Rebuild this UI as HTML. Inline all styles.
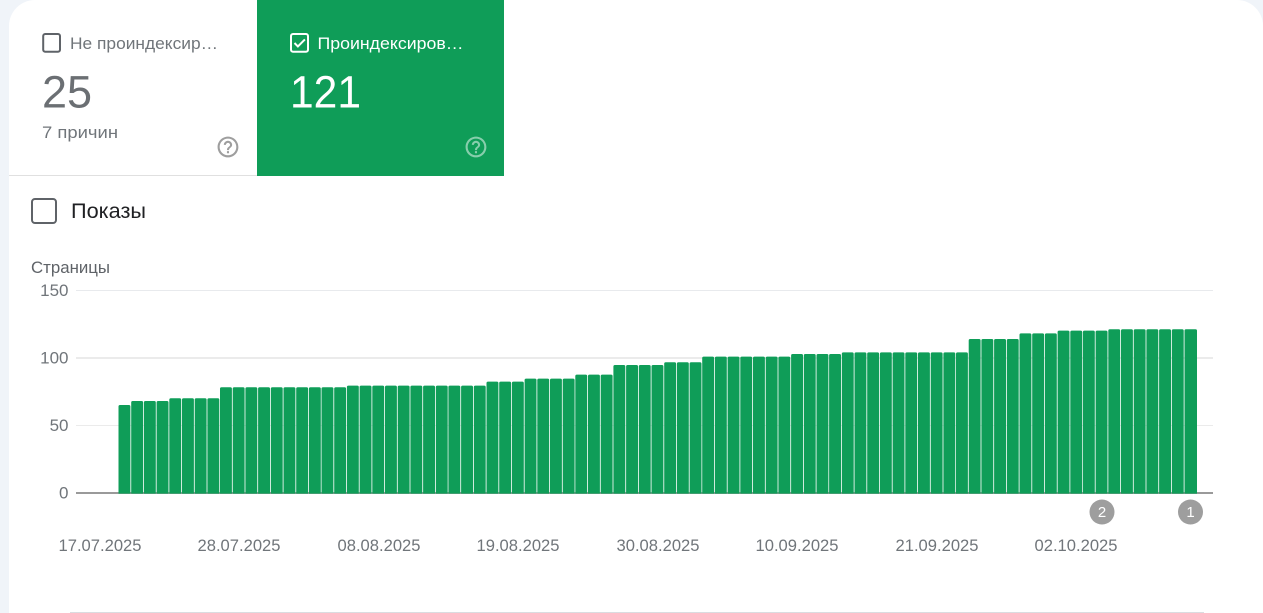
<!DOCTYPE html>
<html lang="ru">
<head>
<meta charset="utf-8">
<title>Страницы</title>
<style>
html,body{margin:0;padding:0;width:1263px;height:613px;overflow:hidden;background:#f0f4f9}
svg{position:absolute;left:0;top:0;display:block}
text{font-family:"Liberation Sans",sans-serif}
#b rect{width:11.9px;height:200px;rx:1.5px;ry:1.5px}
</style>
</head>
<body>
<svg width="1263" height="613" viewBox="0 0 1263 613" xmlns="http://www.w3.org/2000/svg">
<defs><clipPath id="c"><rect x="100" y="300" width="1110" height="193.6"/></clipPath></defs>
<path d="M9 613V26A26 26 0 0 1 35 0H1237A26 26 0 0 1 1263 26V613Z" fill="#fff"/>
<rect x="9" y="175" width="248" height="1" fill="#e0e0e0"/>
<rect x="257" y="0" width="247" height="176" fill="#0f9d58"/>

<rect x="43.2" y="34" width="16.8" height="17.8" rx="2" fill="none" stroke="#5f6368" stroke-width="2"/>
<text x="70" y="49" font-size="17" fill="#70757a" textLength="148" lengthAdjust="spacingAndGlyphs">Не проиндексир…</text>
<text x="42" y="107.5" font-size="45" fill="#6b6f73">25</text>
<text x="42" y="138" font-size="17" fill="#70757a" textLength="76" lengthAdjust="spacingAndGlyphs">7 причин</text>
<g transform="translate(215.5 134.5) scale(1.04)"><path fill="#9e9e9e" d="M11 18h2v-2h-2v2zm1-16C6.48 2 2 6.48 2 12s4.48 10 10 10 10-4.48 10-10S17.52 2 12 2zm0 18c-4.41 0-8-3.59-8-8s3.59-8 8-8 8 3.59 8 8-3.59 8-8 8zm0-14c-2.21 0-4 1.79-4 4h2c0-1.1.9-2 2-2s2 .9 2 2c0 2-3 1.75-3 5h2c0-2.25 3-2.5 3-5 0-2.21-1.79-4-4-4z"/></g>

<rect x="291" y="34" width="17" height="17.8" rx="2" fill="none" stroke="#fff" stroke-width="2"/>
<path d="M294.5 43l3.4 3.4 7-7" fill="none" stroke="#fff" stroke-width="2"/>
<text x="317.5" y="49" font-size="17" fill="#fff" textLength="146" lengthAdjust="spacingAndGlyphs">Проиндексиров…</text>
<text x="290" y="107.5" font-size="45" fill="#fff" textLength="71" lengthAdjust="spacingAndGlyphs">121</text>
<g transform="translate(463.5 134.5) scale(1.04)"><path fill="#fff" fill-opacity=".5" d="M11 18h2v-2h-2v2zm1-16C6.48 2 2 6.48 2 12s4.48 10 10 10 10-4.48 10-10S17.52 2 12 2zm0 18c-4.41 0-8-3.59-8-8s3.59-8 8-8 8 3.59 8 8-3.59 8-8 8zm0-14c-2.21 0-4 1.79-4 4h2c0-1.1.9-2 2-2s2 .9 2 2c0 2-3 1.75-3 5h2c0-2.25 3-2.5 3-5 0-2.21-1.79-4-4-4z"/></g>

<rect x="32" y="199" width="24" height="24" rx="3" fill="none" stroke="#5f6368" stroke-width="2"/>
<text x="71" y="218" font-size="21" fill="#202124" textLength="75" lengthAdjust="spacingAndGlyphs">Показы</text>
<text x="31" y="273" font-size="16.5" fill="#5f6368" textLength="79" lengthAdjust="spacingAndGlyphs">Страницы</text>

<rect x="76" y="290" width="1137" height="1" fill="#e8eaed"/>
<rect x="76" y="357" width="1137" height="2" fill="#ebebeb"/>
<rect x="76" y="425" width="1137" height="1" fill="#ebebeb"/>
<rect x="76" y="492" width="1137" height="2" fill="#9a9a9a"/>

<g font-size="17" fill="#70757a" text-anchor="end">
<text x="68.5" y="296">150</text>
<text x="68.5" y="363.5">100</text>
<text x="68.5" y="431">50</text>
<text x="68.5" y="498.5">0</text>
</g>

<g id="b" clip-path="url(#c)" fill="#0f9d58">
<rect x="118.5" y="405"/><rect x="131.2" y="401"/><rect x="143.9" y="401"/><rect x="156.6" y="401"/>
<rect x="169.3" y="398.3"/><rect x="182" y="398.3"/><rect x="194.7" y="398.3"/><rect x="207.4" y="398.3"/>
<rect x="220" y="387.2"/><rect x="232.7" y="387.2"/><rect x="245.4" y="387.2"/><rect x="258.1" y="387.2"/><rect x="270.8" y="387.2"/>
<rect x="283.5" y="387.2"/><rect x="296.2" y="387.2"/><rect x="308.9" y="387.2"/><rect x="321.5" y="387.2"/><rect x="334.2" y="387.2"/>
<rect x="346.9" y="385.6"/><rect x="359.6" y="385.6"/><rect x="372.3" y="385.6"/><rect x="385" y="385.6"/><rect x="397.7" y="385.6"/><rect x="410.4" y="385.6"/>
<rect x="423.1" y="385.6"/><rect x="435.8" y="385.6"/><rect x="448.4" y="385.6"/><rect x="461.1" y="385.6"/><rect x="473.8" y="385.6"/>
<rect x="486.5" y="381.6"/><rect x="499.2" y="381.6"/><rect x="511.9" y="381.6"/>
<rect x="524.6" y="378.6"/><rect x="537.3" y="378.6"/><rect x="550" y="378.6"/><rect x="562.7" y="378.6"/>
<rect x="575.3" y="374.6"/><rect x="588" y="374.6"/><rect x="600.7" y="374.6"/>
<rect x="613.4" y="365"/><rect x="626.1" y="365"/><rect x="638.8" y="365"/><rect x="651.5" y="365"/>
<rect x="664.2" y="362.2"/><rect x="676.9" y="362.2"/><rect x="689.6" y="362.2"/>
<rect x="702.2" y="356.6"/><rect x="714.9" y="356.6"/><rect x="727.6" y="356.6"/><rect x="740.3" y="356.6"/><rect x="753" y="356.6"/><rect x="765.7" y="356.6"/><rect x="778.4" y="356.6"/>
<rect x="791.1" y="354"/><rect x="803.8" y="354"/><rect x="816.5" y="354"/><rect x="829.1" y="354"/>
<rect x="841.8" y="352.4"/><rect x="854.5" y="352.4"/><rect x="867.2" y="352.4"/><rect x="879.9" y="352.4"/><rect x="892.6" y="352.4"/>
<rect x="905.3" y="352.4"/><rect x="918" y="352.4"/><rect x="930.7" y="352.4"/><rect x="943.4" y="352.4"/><rect x="956" y="352.4"/>
<rect x="968.7" y="339"/><rect x="981.4" y="339"/><rect x="994.1" y="339"/><rect x="1006.8" y="339"/>
<rect x="1019.5" y="333.4"/><rect x="1032.2" y="333.4"/><rect x="1044.9" y="333.4"/>
<rect x="1057.6" y="330.6"/><rect x="1070.3" y="330.6"/><rect x="1082.9" y="330.6"/><rect x="1095.6" y="330.6"/>
<rect x="1108.3" y="329.2"/><rect x="1121" y="329.2"/><rect x="1133.7" y="329.2"/><rect x="1146.4" y="329.2"/><rect x="1159.1" y="329.2"/><rect x="1171.8" y="329.2"/><rect x="1184.5" y="329.2" style="width:12.5px"/>
</g>

<circle cx="1102" cy="512" r="12.5" fill="#9e9e9e"/>
<circle cx="1190.5" cy="512" r="12.5" fill="#9e9e9e"/>
<g font-size="15" fill="#fff" text-anchor="middle">
<text x="1102" y="517">2</text>
<text x="1190.5" y="517">1</text>
</g>

<g font-size="17" fill="#70757a" text-anchor="middle">
<text x="100" y="551" textLength="83" lengthAdjust="spacingAndGlyphs">17.07.2025</text>
<text x="239" y="551" textLength="83" lengthAdjust="spacingAndGlyphs">28.07.2025</text>
<text x="379" y="551" textLength="83" lengthAdjust="spacingAndGlyphs">08.08.2025</text>
<text x="518" y="551" textLength="83" lengthAdjust="spacingAndGlyphs">19.08.2025</text>
<text x="658" y="551" textLength="83" lengthAdjust="spacingAndGlyphs">30.08.2025</text>
<text x="797" y="551" textLength="83" lengthAdjust="spacingAndGlyphs">10.09.2025</text>
<text x="937" y="551" textLength="83" lengthAdjust="spacingAndGlyphs">21.09.2025</text>
<text x="1076" y="551" textLength="83" lengthAdjust="spacingAndGlyphs">02.10.2025</text>
</g>

<rect x="70" y="612" width="1134" height="1" fill="#dadce0"/>
</svg>
</body>
</html>
